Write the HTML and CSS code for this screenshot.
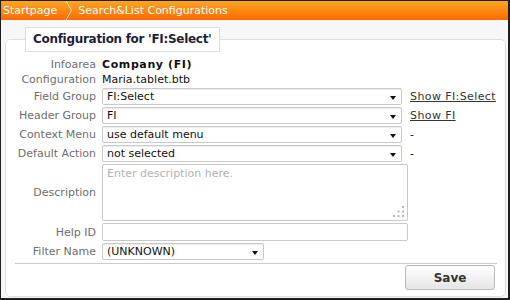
FILE: index.html
```html
<!DOCTYPE html>
<html lang="en">
<head>
  <meta charset="UTF-8" />
  <title>Search&amp;List Configurations</title>
  <link rel="stylesheet" href="styles.css">
</head>
<body>
  <div class="window">
    <header class="crumbs">
      <a class="crumb" href="#">Startpage</a>
      <svg class="crumb-sep" width="8" height="19" viewBox="0 0 8 19">
        <path d="M1 0 L6.5 9.5 L1 19" fill="none" stroke="#fff" stroke-opacity="0.8" stroke-width="1" />
      </svg>
      <span class="crumb">Search&amp;List Configurations</span>
    </header>

    <main class="content">
      <fieldset class="panel">
        <legend class="panel-title">Configuration for 'FI:Select'</legend>

        <div class="form">
          <label class="label">Infoarea</label>
          <div class="value value-strong wide">Company (FI)</div>

          <label class="label">Configuration</label>
          <div class="value wide">Maria.tablet.btb</div>

          <label class="label">Field Group</label>
          <div class="select">
            <select><option>FI:Select</option></select>
          </div>
          <a class="side-link" href="#">Show FI:Select</a>

          <label class="label">Header Group</label>
          <div class="select">
            <select><option>FI</option></select>
          </div>
          <a class="side-link" href="#">Show FI</a>

          <label class="label">Context Menu</label>
          <div class="select">
            <select><option>use default menu</option></select>
          </div>
          <span class="side-text">-</span>

          <label class="label">Default Action</label>
          <div class="select">
            <select><option>not selected</option></select>
          </div>
          <span class="side-text">-</span>

          <label class="label">Description</label>
          <div class="textarea wide">
            <textarea placeholder="Enter description here."></textarea>
            <svg class="grip" width="12" height="12" viewBox="0 0 12 12">
              <rect x="9" y="0" width="2" height="2" />
              <rect x="4.5" y="4.5" width="2" height="2" />
              <rect x="9" y="4.5" width="2" height="2" />
              <rect x="0" y="9" width="2" height="2" />
              <rect x="4.5" y="9" width="2" height="2" />
              <rect x="9" y="9" width="2" height="2" />
            </svg>
          </div>

          <label class="label">Help ID</label>
          <div class="wide">
            <input class="text-input" type="text" />
          </div>

          <label class="label">Filter Name</label>
          <div class="select select-small wide">
            <select><option>(UNKNOWN)</option></select>
          </div>
        </div>

        <hr class="divider" />

        <div class="actions">
          <button class="btn">Save</button>
        </div>
      </fieldset>
    </main>
  </div>
</body>
</html>
```

FILE: styles.css
```css
* {
  box-sizing: border-box;
}

body {
  margin: 0;
  font-family: 'DejaVu Sans', Verdana, sans-serif;
  font-size: 11px;
  color: #111;
}

.window {
  width: 510px;
  height: 300px;
  display: flex;
  flex-direction: column;
  background: #f7f7f7;
  border-style: solid;
  border-color: #1e1e1e;
  border-width: 1px 2px 2px 1px;
}

.crumbs {
  height: 19px;
  display: flex;
  align-items: center;
  padding-left: 2px;
  background: linear-gradient(#fba624, #fe6a00);
  color: #fff;
}

.crumb {
  color: #fff;
  text-decoration: none;
}

.crumb-sep {
  margin: 0 5px 0 8px;
}

.content {
  flex: 1;
  display: flex;
  flex-direction: column;
  padding: 7px 2px 1px 4px;
}

.panel {
  flex: 1;
  margin: 0;
  padding: 0;
  background: #fff;
  border: 1px solid #dedede;
  border-radius: 5px;
}

.panel-title {
  margin-left: 19px;
  height: 25px;
  padding: 0 8px 0 7px;
  line-height: 23px;
  font-size: 12px;
  font-weight: bold;
  letter-spacing: -0.3px;
  color: #1f1f3a;
  background: #fff;
  border: 1px solid #dddddd;
}

.form {
  display: grid;
  grid-template-columns: 90px 300px 1fr;
  column-gap: 6px;
  row-gap: 2px;
  align-items: center;
  padding-top: 6px;
}

.label {
  text-align: right;
  line-height: 13px;
  color: #6e6e6e;
}

.value {
  line-height: 13px;
}

.value-strong {
  font-weight: bold;
  letter-spacing: 0.6px;
}

.wide {
  grid-column: 2 / 4;
}

.select {
  position: relative;
  height: 17px;
}

.select select {
  appearance: none;
  width: 100%;
  height: 17px;
  margin: 0;
  padding: 0 4px;
  font: inherit;
  color: #111;
  background: #fff;
  border: 1px solid #c9c9c9;
  border-radius: 2px;
  box-shadow: inset 0 1px 0 #eeeeee;
}

.select::after {
  content: "";
  position: absolute;
  top: 8px;
  right: 6px;
  border-left: 3px solid transparent;
  border-right: 3px solid transparent;
  border-top: 4px solid #111;
}

.select-small {
  width: 162px;
}

.side-link {
  margin-left: 2px;
  color: #333;
  letter-spacing: 0.4px;
}

.side-text {
  margin-left: 2px;
}

.textarea {
  position: relative;
  width: 306px;
  height: 57px;
}

.textarea textarea {
  display: block;
  width: 100%;
  height: 100%;
  margin: 0;
  padding: 2px 4px;
  font: inherit;
  resize: none;
  border: 1px solid #c9c9c9;
  border-radius: 2px;
}

.textarea textarea::placeholder {
  color: #b3b3b3;
}

.grip {
  position: absolute;
  right: 3px;
  bottom: 3px;
  fill: #b5b5b5;
}

.text-input {
  display: block;
  width: 306px;
  height: 18px;
  margin: 0;
  font: inherit;
  border: 1px solid #c9c9c9;
  border-radius: 2px;
}

.divider {
  margin: 3px 8px 1px 9px;
  border: 0;
  border-top: 1px solid #cccccc;
}

.actions {
  display: flex;
  justify-content: flex-end;
  padding-right: 10px;
}

.btn {
  width: 90px;
  height: 25px;
  font-family: 'DejaVu Sans', Verdana, sans-serif;
  font-size: 12px;
  font-weight: bold;
  color: #333;
  background: linear-gradient(#ffffff, #e5e5e5);
  border: 1px solid #b8b8b8;
  border-radius: 3px;
  cursor: pointer;
}
```
